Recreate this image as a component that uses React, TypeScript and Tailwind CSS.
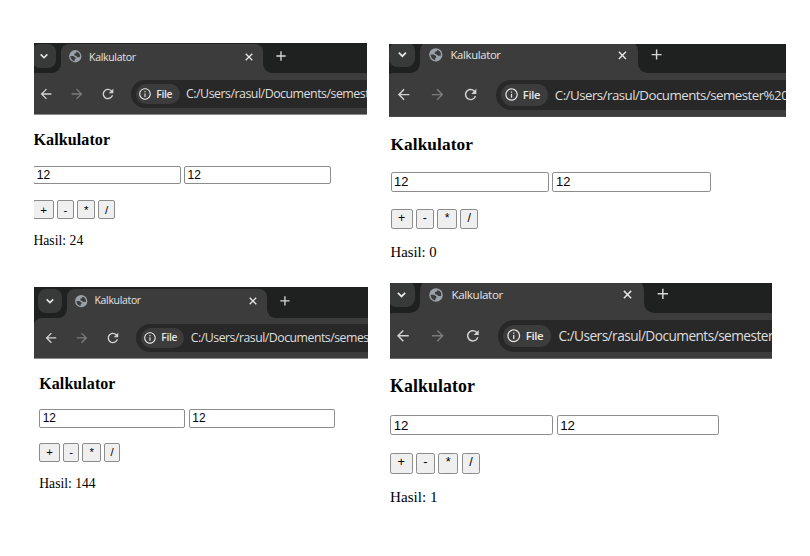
import { MdAdd, MdArrowBack, MdArrowForward, MdInfoOutline, MdRefresh } from "react-icons/md";

type WindowProps = {
  result: string;
  frame: string;
  stripHeight: string;
  chromeHeight: string;
  chromeShift: string;
  bodyPadding: string;
  zoom: string;
  edge: string;
};

const OPERATORS = [
  { sign: "+", width: "w-[20.5px]" },
  { sign: "-", width: "w-[17px]" },
  { sign: "*", width: "w-[18.5px]" },
  { sign: "/", width: "w-[16.5px]" },
];

function Globe() {
  return (
    <svg viewBox="0 0 24 24" className="size-[14.5px] shrink-0">
      <circle cx="12" cy="12" r="10.2" fill="#9ba1a8" />
      <path
        d="M14.500 4.500 12.500 7.500H10.500V10.500L13.500 11.500 15.500 13.500H19.500L20 10.500C19.500 7.800 17.500 5.400 14.500 4.500z"
        fill="#3c3c3c"
      />
      <path d="M4 11.500H8.500L12.500 14V16.500L11 17.500V20C7.200 19.600 4 16.300 4 11.500z" fill="#3c3c3c" />
    </svg>
  );
}

function TabStrip() {
  return (
    <div className="flex h-[30px] w-[600px] bg-[#3c3c3c]">
      <div className="flex w-[33px] items-end rounded-br-[9px] bg-[#1f2120] pb-[5px] pl-[4px]">
        <div className="flex h-[24px] w-[24px] items-center justify-center rounded-[8px] bg-[#383939]">
          <svg viewBox="0 0 10 10" className="size-[10px]" fill="none" stroke="#e6e6e6" strokeWidth="1.6">
            <path d="M1.700 3.400 5 6.700 8.300 3.400" />
          </svg>
        </div>
      </div>
      <div className="w-[202px] bg-[linear-gradient(#1f2120_50%,#3c3c3c_50%)] pt-[1px]">
        <div className="flex h-full items-center rounded-t-[8px] bg-[#3c3c3c] pb-[4px] pl-[7px]">
          <Globe />
          <span className="ml-[6.5px] text-[10.5px] leading-[14px] tracking-[-0.3px] text-[#e3e3e3]">
            Kalkulator
          </span>
          <svg
            viewBox="0 0 10 10"
            className="mr-[9.5px] ml-auto size-[10px]"
            fill="none"
            stroke="#e6e6e6"
            strokeWidth="1.3"
          >
            <path d="M1.700 1.700 8.300 8.300M8.300 1.700 1.700 8.300" />
          </svg>
        </div>
      </div>
      <div className="flex flex-1 items-center rounded-bl-[9px] bg-[#1f2120] pb-[4px] pl-[9.5px]">
        <MdAdd className="size-[16px] text-[#d6d6d6]" />
      </div>
    </div>
  );
}

function Toolbar() {
  return (
    <div className="w-[600px] bg-[#1f2120]">
      <div className="flex h-[44px] items-start rounded-tl-[8px] bg-[#3c3c3c] pt-[6.5px] pl-[9.5px]">
        <div className="flex h-[28.5px] items-center">
          <MdArrowBack className="size-[16px] text-[#d2d2d2]" />
          <MdArrowForward className="ml-[15px] size-[16px] text-[#7b7b7b]" />
          <MdRefresh className="ml-[15.5px] size-[16px] text-[#d2d2d2]" />
        </div>
        <div className="ml-[15px] flex h-[28.5px] flex-1 items-center rounded-l-full bg-[#282828] pl-[5px]">
          <div className="flex h-[20.5px] w-[43.5px] items-center rounded-full bg-[#3c3c3c] pl-[2.3px]">
            <MdInfoOutline className="size-[14px] shrink-0 text-[#e3e3e3]" />
            <span className="ml-[4px] text-[10.3px] leading-[14px] font-semibold tracking-[-0.3px] text-[#e6e6e6]">
              File
            </span>
          </div>
          <span className="ml-[6.5px] pt-[0.5px] text-[12.4px] leading-[16px] tracking-[-0.5px] whitespace-nowrap text-[#dedede]">
            C:/Users/rasul/Documents/semester%20
          </span>
        </div>
      </div>
    </div>
  );
}

function CalculatorWindow(p: WindowProps) {
  return (
    <section className={`overflow-hidden ${p.frame}`}>
      <header className={`overflow-hidden font-['Open_Sans','Noto_Sans',sans-serif] ${p.chromeHeight} ${p.edge}`}>
        <div className={`flex flex-col justify-end overflow-hidden bg-[#1f2120] ${p.stripHeight}`}>
          <div className={p.chromeShift}>
            <div className={p.zoom}>
              <TabStrip />
            </div>
          </div>
        </div>
        <div className={p.chromeShift}>
          <div className={p.zoom}>
            <Toolbar />
          </div>
        </div>
      </header>
      <div className={p.bodyPadding}>
        <div className={`w-[320px] font-['Liberation_Serif',serif] text-black ${p.zoom}`}>
          <h3 className="text-[16.1px] leading-[18px] font-bold tracking-[0.08px]">Kalkulator</h3>
          <div className="mt-[16.7px] flex gap-[3.5px]">
            {["first", "second"].map((name) => (
              <input
                key={name}
                aria-label={name}
                defaultValue="12"
                className="h-[18.5px] w-[147.2px] rounded-[2px] border border-[#8c8c8c] bg-white px-[2.4px] font-['Liberation_Sans',sans-serif] text-[12px] leading-[14px]"
              />
            ))}
          </div>
          <div className="mt-[15.8px] flex gap-[3px]">
            {OPERATORS.map((op) => (
              <button
                key={op.sign}
                className={`h-[19px] rounded-[2px] border border-[#8c8c8c] bg-[#efefef] text-center font-['Liberation_Sans',sans-serif] text-[11.5px] leading-[16px] ${op.width}`}
              >
                {op.sign}
              </button>
            ))}
          </div>
          <p className="mt-[13.7px] text-[13.7px] leading-[16px]">Hasil: {p.result}</p>
        </div>
      </div>
    </section>
  );
}

export default function App() {
  return (
    <main className="flex h-[556px] w-[810px] overflow-hidden bg-white pl-[34px]">
      <div className="w-[334px] pt-[43px]">
        <CalculatorWindow
          result="24"
          frame="h-[244px] w-[333px]"
          stripHeight="h-[30px]"
          chromeHeight="h-[72px]"
          chromeShift="-ml-[6px]"
          bodyPadding="pt-[16.2px] -ml-[0.6px]"
          zoom="[zoom:1]"
          edge="border-b border-[#8a8a8a]"
        />
        <CalculatorWindow
          result="144"
          frame="h-[244px] w-[334px]"
          stripHeight="h-[30.5px]"
          chromeHeight="h-[72px]"
          chromeShift="ml-0"
          bodyPadding="pt-[15.7px] pl-[5.3px]"
          zoom="[zoom:0.993]"
          edge="border-b border-[#8a8a8a]"
        />
      </div>
      <div className="ml-[21px] w-[397px] pt-[44px]">
        <CalculatorWindow
          result="0"
          frame="h-[239px] w-[397px]"
          stripHeight="h-[28.7px]"
          chromeHeight="h-[73px]"
          chromeShift="-ml-[4px]"
          bodyPadding="pt-[17.5px] pl-[1.5px]"
          zoom="[zoom:1.075]"
          edge="border-b border-[#4a4a4a]"
        />
        <CalculatorWindow
          result="1"
          frame="ml-px h-[239px] w-[382px]"
          stripHeight="h-[30px]"
          chromeHeight="h-[76px]"
          chromeShift="-ml-[6px]"
          bodyPadding="pt-[17.6px]"
          zoom="[zoom:1.105]"
          edge="border-b border-[#6c6c6c]"
        />
      </div>
    </main>
  );
}
